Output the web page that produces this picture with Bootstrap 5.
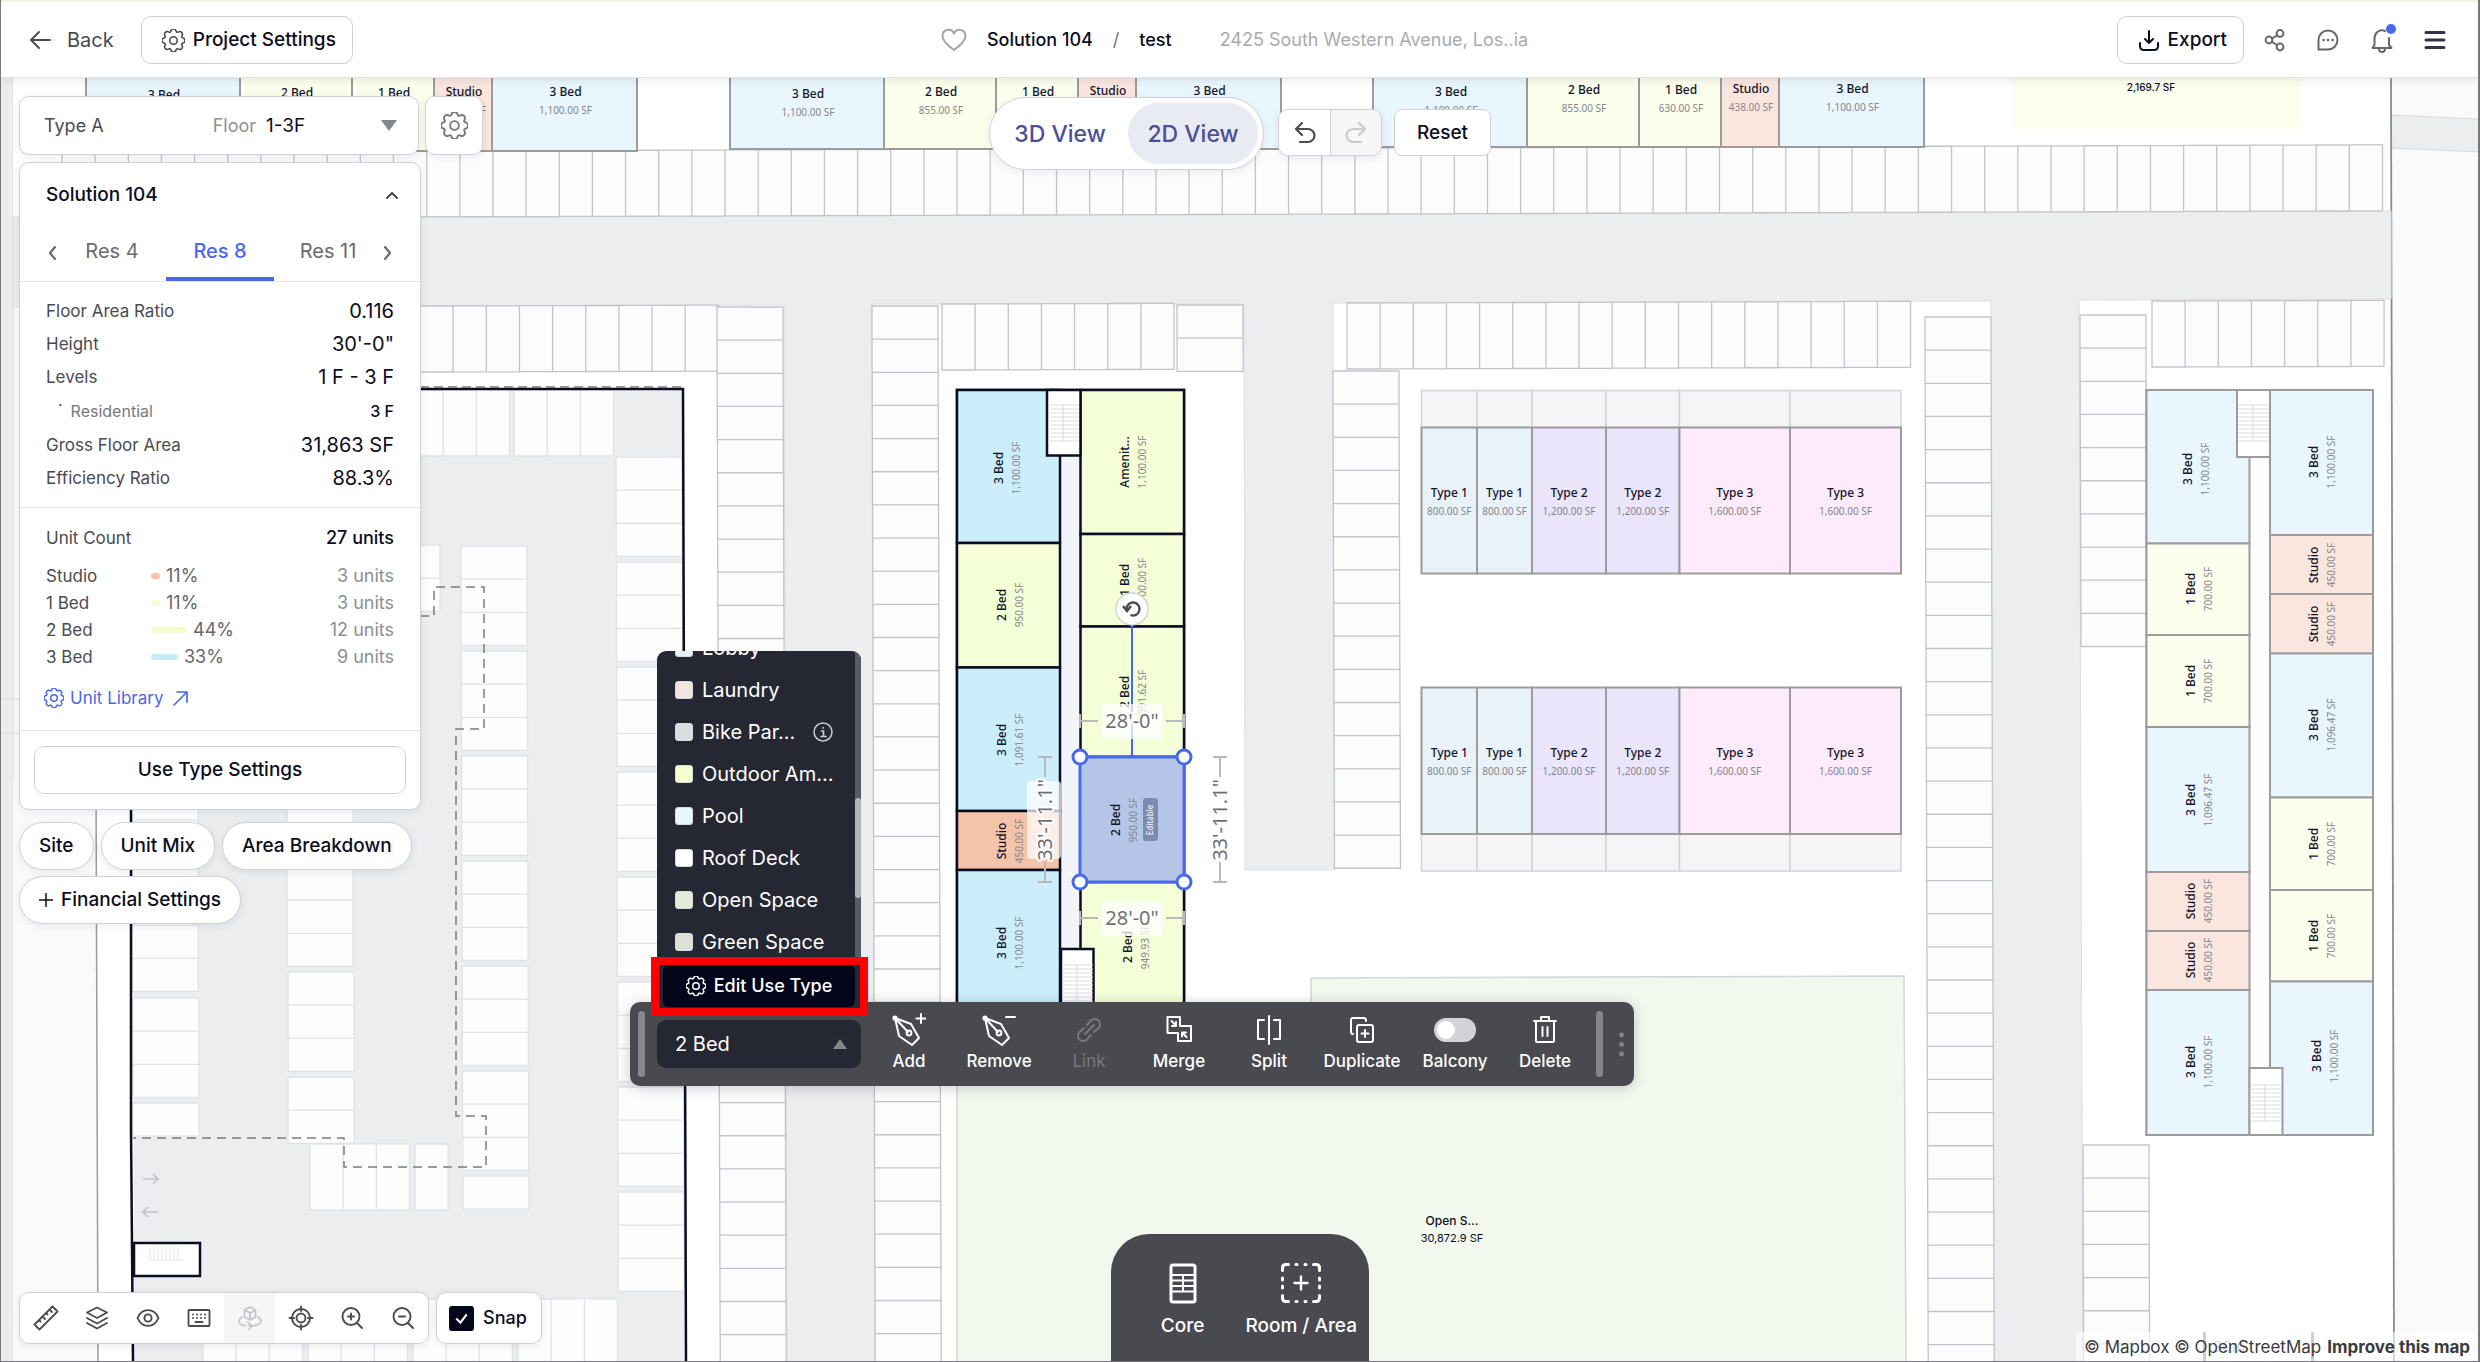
<!DOCTYPE html>
<html lang="en">
<head>
<meta charset="utf-8">
<meta name="viewport" content="width=device-width, initial-scale=1">
<title>Solution 104 / test</title>
<link href="https://cdn.jsdelivr.net/npm/bootstrap@5.3.0/dist/css/bootstrap.min.css" rel="stylesheet">
<style>
:root{--ink:#0b0d22;--soft:#4a4b50;--mute:#8e8f94;--edge:#d0d1d6;--blue:#4869ec;--dark:#494a4f;--deep:#252833}
body{font-family:Inter,"Liberation Sans",sans-serif;font-size:18px;line-height:24px;color:var(--ink);background:#fff;border:1px solid #77787b;border-top:0;border-right-width:2px;overflow:hidden}
svg.ico{fill:none;stroke:currentColor;stroke-linecap:round;stroke-linejoin:round;flex:none;display:block}
button{font-weight:500;color:inherit}
.topbar{height:78px;background:#fff;border-bottom:1px solid #e2e3e6;box-shadow:0 1px 10px rgba(30,30,60,.12);z-index:5;border-top:2px solid #f1f1e6;padding-top:1px}
.topbar>div{flex:1 1 0}
.crumbs{padding-right:2px}
.addr{color:#a9aaae}
.endset{gap:20px;padding-right:32px;color:#66676c}
.endicons{gap:30px}
.backset{gap:27px}
.bare{border:0;background:none;padding:0;color:var(--soft);font-weight:400}
.boxbtn{border:1px solid var(--edge);border-radius:10px;background:#fff;height:48px;color:var(--ink);font-weight:500;font-size:19px}
.fs20{font-size:20px}
.dotnew{position:absolute;right:-2px;top:-3px;width:10px;height:10px;border-radius:50%;background:var(--blue)}
.stage{min-height:0}
.plan{position:absolute;inset:0;width:100%;height:100%;display:block}
.plan .stall{fill:#fcfcfc;stroke:#c3c3ca;stroke-width:1.3}
.plan .pale{fill:#fdfdfd;stroke:#e1e2e6;stroke-width:1.3}
.plan text{text-anchor:middle;font-family:"Noto Sans","Open Sans",sans-serif}
.plan .un{font-size:12px;font-weight:500;fill:#12142a}
.plan .sf{font-size:10px;fill:#85868c}
.plan .tag{font-size:8px;fill:#fff}
.plan .ui{font-family:Inter,sans-serif}
.plan .dim{font-size:20px;fill:#6f7075;stroke:#fff;stroke-width:4px;paint-order:stroke;stroke-linejoin:round}
.leftcol{position:absolute;left:18px;top:18px;z-index:2}
.gap7{gap:7px}
.gap6{gap:6px}
.floaty{background:#fff;border:1px solid var(--edge);border-radius:10px;box-shadow:0 2px 8px rgba(30,30,60,.08)}
.floorbar{width:400px;height:59px;padding:0 16px 0 24px}
.floorbar label{color:var(--mute);margin-right:10px}
.floorbar select{appearance:none;border:0;outline:0;color:var(--ink);width:136px;padding:0;font-size:19px;background:url("data:image/svg+xml,%3Csvg xmlns='http://www.w3.org/2000/svg' viewBox='0 0 16 11'%3E%3Cpath d='M0 0h16L8 11z' fill='%2385868b'/%3E%3C/svg%3E") no-repeat right 5px center/16px 11px}
.gearbtn{width:58px;height:59px;color:#77787d}
.report{width:402px;margin-top:7px}
.headrow{padding:20px 22px 18px 26px;font-size:19px}
.tabs{height:56px;color:#6a6b70}
.tabs button{height:56px;border:0;background:none;padding:0;font-weight:400;font-size:20px;border-bottom:4px solid transparent;border-radius:2px 2px 0 0;width:108px;color:#6a6b70}
.tabs button.on{color:var(--blue);font-weight:500;border-color:var(--blue)}
.rule{border-top:1px solid #e3e4e7}
.inset{padding:12px 26px 13px}
.inset2{padding:18px 26px 20px}
.inset3{padding:15px 14px}
.metric{height:33px;color:var(--soft)}
.metric.tall{height:35px}
.metric b{font-weight:400;font-size:20px;color:var(--ink)}
.lbl{font-size:17px}
.metric.tall,.metric b.small3{font-size:16px}
.mix{height:27px;font-size:18px;color:#66676c}
.mix .nm{width:105px;font-size:17px;color:var(--soft)}
.mix .bar{height:6px;border-radius:3px;margin-right:6px}
.mix .u{color:var(--mute);margin-left:auto}
.liblink{color:var(--blue);font-size:17px;text-decoration:none;gap:6px;margin-left:-2px}
.pills{margin-top:12px}
.pillbtn{height:48px;border-radius:24px;padding:0 19px;font-weight:500;font-size:19px}
.finbtn{margin-top:6px}
.viewsw{position:absolute;left:988px;top:19px;height:73px;border-radius:37px;padding:5px;gap:3px}
.viewsw button{border:0;background:none;border-radius:31px;width:130px;font-size:23px;color:#4b4f97;font-weight:500}
.viewsw button.on{background:#e9ebf2}
.hist{position:absolute;left:1277px;top:31px;gap:12px}
.hist button{width:51px;height:45px;border:0;background:#fff;color:#4a4b50}
.hist button:disabled{background:#f6f6f7;color:#c9cacd}
.hist .grp{overflow:hidden}
.hist .grp button+button{border-left:1px solid var(--edge)}
.hist .rst{width:97px;height:47px;border:1px solid var(--edge);border-radius:8px;color:var(--ink);background:#fff;font-size:19px}
.tools{position:absolute;left:18px;bottom:17px}
.tools .cell{width:51px;height:50px;border:0;background:none;padding:0;color:var(--soft)}
.tools .cell:disabled{background:#f5f5f5;color:#c4c5c8}
.snap{width:106px;padding-left:12px;font-weight:500;gap:9px}
.snap input{appearance:none;width:25px;height:25px;border-radius:3px;margin:0;background:#04061c url("data:image/svg+xml,%3Csvg xmlns='http://www.w3.org/2000/svg' viewBox='0 0 24 24'%3E%3Cpath d='M7 12l4 4 6-8' fill='none' stroke='%23fff' stroke-width='2'/%3E%3C/svg%3E")}
.editbar{position:absolute;left:629px;top:924px;height:84px;width:1004px;border-radius:10px;background:var(--dark);color:#fff;box-shadow:0 2px 14px rgba(30,30,60,.22);padding:0 10px 0 8px}
.grip{width:7px;height:66px;border-radius:4px;background:#86878c}
.usesel{appearance:none;width:204px;height:48px;margin:0 3px 0 12px;border:0;border-radius:9px;padding:0 18px;color:#fff;font-size:20px;background:var(--deep) url("data:image/svg+xml,%3Csvg xmlns='http://www.w3.org/2000/svg' viewBox='0 0 14 10'%3E%3Cpath d='M0 10h14L7 0z' fill='%2385868b'/%3E%3C/svg%3E") no-repeat right 14px center/14px 10px}
.act{width:90px;border:0;background:none;color:#fff;padding:0 0 3px;font-size:17px;line-height:22px;gap:3px}
.act.wide{width:96px}
.act:disabled{color:#77787d;font-weight:400}
.form-switch.bal{padding:0 0 3px;min-height:0}
.bal span{height:34px}
.bal input.form-check-input{width:42px;height:24px;margin:0;float:none;border:0;background-color:#d2d3d8;background-image:url("data:image/svg+xml,%3Csvg xmlns='http://www.w3.org/2000/svg' viewBox='-4 -4 8 8'%3E%3Ccircle r='3' fill='%23fff'/%3E%3C/svg%3E")}
.usemenu{position:absolute;left:656px;top:573px;width:204px;height:352px;border-radius:9px 9px 0 0;background:var(--deep);color:#fff;overflow:hidden;font-size:20px}
.usemenu ul{margin:-24px 0 0;height:330px;overflow:hidden}
.usemenu li{height:42px;padding:0 28px 0 18px;gap:9px;white-space:nowrap}
.swatch{width:18px;height:18px;border-radius:3px;border:1px solid #d9dade;flex:none}
.track{position:absolute;right:0;top:0;width:6px;height:306px;background:#5a5b66}
.track i{display:block;width:6px;height:100px;margin-top:147px;border-radius:3px;background:#b3b4b8}
.callout{position:absolute;left:650px;top:879px;width:217px;height:59px;border:8px solid #f00;background:var(--deep);z-index:3;padding:0 5px 0 4px}
.callout button{border:0;border-radius:6px;background:#03051b;color:#fff;height:42px;width:100%;font-size:18px;padding:0 0 1px}
.makebar{position:absolute;left:1110px;bottom:0;width:258px;height:127px;border-radius:38px 38px 0 0;background:var(--dark);color:#fff;padding:28px 12px 0 0;gap:41px}
.makebar button{border:0;background:none;color:#fff;padding:0;font-size:19px;line-height:24px}
.makebar svg{margin-bottom:10px}
.attrib{position:absolute;right:0;bottom:0;height:29px;background:rgba(255,255,255,.6);padding:0 8px;font-size:17px;color:#3a3b40}
.attrib a{color:inherit;text-decoration:none}
</style>
</head>
<body class="vh-100 d-flex flex-column">
<svg width="0" height="0" class="position-absolute" aria-hidden="true">
 <symbol id="gear" viewBox="0 0 16 16"><path d="M9.796 1.343c-.527-1.79-3.065-1.79-3.592 0l-.094.319a.873.873 0 0 1-1.255.52l-.292-.16c-1.64-.892-3.433.902-2.54 2.541l.159.292a.873.873 0 0 1-.52 1.255l-.319.094c-1.79.527-1.79 3.065 0 3.592l.319.094a.873.873 0 0 1 .52 1.255l-.16.292c-.892 1.64.901 3.434 2.541 2.54l.292-.159a.873.873 0 0 1 1.255.52l.094.319c.527 1.79 3.065 1.79 3.592 0l.094-.319a.873.873 0 0 1 1.255-.52l.292.16c1.64.893 3.434-.902 2.54-2.541l-.159-.292a.873.873 0 0 1 .52-1.255l.319-.094c1.79-.527 1.79-3.065 0-3.592l-.319-.094a.873.873 0 0 1-.52-1.255l.16-.292c.893-1.64-.902-3.433-2.541-2.54l-.292.159a.873.873 0 0 1-1.255-.52z"/><circle cx="8" cy="8" r="2.6"/></symbol>
 <symbol id="pen" viewBox="0 0 34 34"><path d="M3 5l16 6 8 14-7 7-13-9zM3 5l13 14"/><circle cx="17" cy="20" r="2.4"/><circle cx="3" cy="5" r="1.6" fill="currentColor"/></symbol>
</svg>

<header class="topbar d-flex align-items-center position-relative">
 <div class="backset d-flex align-items-center ps-4">
  <button class="bare fs20 d-flex align-items-center ms-1"><svg class="ico me-3" width="22" height="20" viewBox="0 0 22 20" stroke-width="2"><path d="M2 10h19M10 2l-8 8 8 8"/></svg>Back</button>
  <button class="boxbtn d-flex align-items-center px-3"><svg class="ico ms-1 me-2" width="23" height="23" stroke-width="1.1" color="#4a4b50"><use href="#gear"/></svg>Project Settings</button>
 </div>
 <nav class="crumbs d-flex align-items-center justify-content-center" aria-label="Project">
  <svg class="ico me-3" width="26" height="24" viewBox="0 0 26 24" stroke-width="2" color="#a3a4a9"><path d="M13 22C6 17 1.500 12.500 1.500 8A6 6 0 0 1 13 5.500 6 6 0 0 1 24.500 8C24.500 12.500 20 17 13 22z"/></svg>
  <span class="fw-medium ms-1">Solution 104</span><span class="mx-3 px-1 text-secondary">/</span><span class="fw-medium">test</span>
  <span class="addr ms-5">2425 South Western Avenue, Los..ia</span>
 </nav>
 <div class="endset d-flex align-items-center justify-content-end">
  <button class="boxbtn d-flex align-items-center px-3"><svg class="ico ms-1 me-2" width="22" height="22" viewBox="0 0 22 22" stroke-width="2"><path d="M11 2v12M7 10l4 4 4-4M2 14v3q0 4 4 4h10q4 0 4-4v-3"/></svg>Export</button>
  <div class="endicons d-flex align-items-center">
  <svg class="ico" width="22" height="24" viewBox="0 0 22 24" stroke-width="2"><circle cx="5" cy="12" r="3.400"/><circle cx="16" cy="5.500" r="3.400"/><circle cx="16" cy="19" r="3.400"/><path d="M8 10.500l5-3M8 14l5 3"/></svg>
  <svg class="ico" width="24" height="24" viewBox="0 0 24 24" stroke-width="2"><path d="M2.500 21.500V12A9.500 9.500 0 1 1 12 21.500z"/><path d="M7.500 12h.1M12 12h.1M16.500 12h.1" stroke-width="2.600"/></svg>
  <span class="position-relative"><svg class="ico" width="24" height="26" viewBox="0 0 24 26" stroke-width="2"><path d="M4.500 18V10.500A7.500 7.500 0 0 1 15 4M19 11v7l2.500 3h-19l2-3M9 22a3 3 0 0 0 6 0"/></svg><i class="dotnew"></i></span>
  <svg class="ico" width="22" height="20" viewBox="0 0 22 20" stroke-width="3" color="#33354a"><path d="M2 2.500h18M2 10h18M2 17.500h18"/></svg>
  </div>
 </div>
</header>

<main class="stage position-relative flex-fill">
<svg class="plan" viewBox="1 78 2477 1283" preserveAspectRatio="xMinYMin slice" id="plan" role="img" aria-label="Site plan">
 <rect width="2480" height="1362" fill="#fafafa"/>
 <rect width="13" height="1362" fill="#ecedef"/><path d="M13 78V1362" stroke="#dcdde0"/><path d="M0 699h20M0 733h20" stroke="#dcdde0"/>
 <path d="M2391 115l89 4v33l-89-4z" fill="#ecedef" stroke="#d9dadd"/>
 <path d="M13 78H2391L2394 1362H98L96 306H13z" fill="#fff"/>
 <path d="M13 780h83l2 582H13z" fill="#fafafa"/>
 <path d="M96 780L98 1362" stroke="#9a9b9e" stroke-width="1.500"/>
 <path d="M2391 78L2394 1362" stroke="#8b8c90" stroke-width="1.800"/>
 <g fill="#ecedef" stroke="#dddee1" stroke-width="1">
  <path d="M13 217L2391 211V299L2079 300 2083 1362H1994L1991 301 1333 303 1335 870H1245L1244 304 872 304 875 1362H787L784 305 13 307z"/>
 </g>
 <path d="M1311 978L1904 976 1906 1362H957V1080H1311z" fill="#f3f8ef" stroke="#d3d6d6" stroke-width="1.500"/>
 <path d="M132 389H683L686 1362H134z" fill="#ecedef"/>
 <g id="stalls"></g>
 <path d="M131 389H683L686 1362" fill="none" stroke="#0b0d22" stroke-width="2.500"/>
 <path d="M420 387H683" stroke="#777" stroke-width="1.500" stroke-dasharray="9 5"/>
 <path d="M131 389V1130L133 1362" fill="none" stroke="#0b0d22" stroke-width="2.500"/>
 <path d="M420 616h14v-29h50v142h-28v387h30v51H344v-29H133" fill="none" stroke="#7a7b80" stroke-width="1.500" stroke-dasharray="9 6"/>
 <rect x="134" y="1243" width="66" height="33" fill="#fff" stroke="#0b0d22" stroke-width="2.500"/>
 <path d="M149 1260h36M150 1246v14M154 1246v14M158 1246v14M162 1246v14M166 1246v14M170 1246v14M174 1246v14M178 1246v14" stroke="#e6e6ea"/>
 <path d="M143 1179h15l-5-5m5 5l-5 5M158 1212h-15l5-5m-5 5l5 5" fill="none" stroke="#c2c3c6" stroke-width="1.500"/>
 <rect x="2013" y="78" width="289" height="51" fill="#fcfeee"/>
 <text class="ui" x="2151" y="91" font-size="10" font-weight="500" fill="#0b0d22">2,169.7 SF</text>
 <g id="units"></g>
 <g fill="none" stroke="#4869ec">
  <path d="M1132 620V757" stroke-width="2"/>
  <rect x="1080" y="757" width="104" height="125" fill="#b4c5e8" stroke-width="3"/>
 </g>
 <g id="seltext"></g>
 <rect x="1143" y="798" width="15" height="43" rx="3" fill="#7d8bb4"/>
 <text class="tag" transform="translate(1153 820) rotate(-90)">Editable</text>
 <circle cx="1132" cy="609" r="16" fill="#fff" stroke="#d3d3da" stroke-width="1.500"/>
 <path d="M1126.500 610a6.500 6.500 0 1 1 4 6M1123 607l4 5 4-5" fill="none" stroke="#4a4b50" stroke-width="2.400" transform="translate(0 -1)"/>
 <g fill="#fff" fill-opacity=".72"><rect x="1101" y="704" width="62" height="35" rx="4"/><rect x="1101" y="901" width="62" height="35" rx="4"/><rect x="1027" y="781" width="34" height="78" rx="4"/></g>
 <path d="M1080 721h18M1166 721h18M1080 714v14M1184 714v14M1080 918h18M1166 918h18M1080 911v14M1184 911v14M1045 757v20M1045 862v20M1038 757h14M1038 882h14M1220 757v20M1220 862v20M1213 757h14M1213 882h14" stroke="#b7b9bd" stroke-width="2"/>
 <text class="dim" x="1132" y="728">28'-0"</text><text class="dim" x="1132" y="925">28'-0"</text>
 <text class="dim" transform="translate(1052 820) rotate(-90)">33'-11.1"</text>
 <text class="dim" transform="translate(1227 820) rotate(-90)">33'-11.1"</text>
 <g fill="#fff" stroke="#4869ec" stroke-width="3"><circle cx="1080" cy="757" r="7"/><circle cx="1184" cy="757" r="7"/><circle cx="1080" cy="882" r="7"/><circle cx="1184" cy="882" r="7"/></g>
 <text class="ui" x="1452" y="1225" font-size="12" font-weight="500" fill="#0b0d22">Open S...</text>
 <text class="ui" x="1452" y="1242" font-size="11" fill="#0b0d22">30,872.9 SF</text>
 <path d="M2204.500 1332v29M2312.500 1332v29" stroke="#85868a" stroke-width="3"/>
 <text class="ui" x="2229" y="1352" font-size="15" fill="#9a9b9e">30m</text>
</svg>

<div class="leftcol d-flex flex-column align-items-start">
 <div class="d-flex gap6">
  <div class="floaty floorbar d-flex align-items-center">
   <span class="flex-fill" style="color:var(--soft)">Type A</span>
   <label for="floor">Floor</label>
   <select id="floor"><option>1-3F</option></select>
  </div>
  <button class="floaty gearbtn d-flex align-items-center justify-content-center p-0" aria-label="Floor settings"><svg class="ico" width="27" height="27" stroke-width="1.100"><use href="#gear"/></svg></button>
 </div>
 <section class="floaty report">
  <div class="headrow d-flex align-items-center justify-content-between fw-medium">
   <span>Solution 104</span><svg class="ico" width="12" height="8" viewBox="0 0 12 8" stroke-width="2" color="#4a4b50"><path d="M1 7l5-5 5 5"/></svg>
  </div>
  <div class="tabs d-flex align-items-center px-4">
   <svg class="ico ms-1" width="9" height="14" viewBox="0 0 9 14" stroke-width="2.200"><path d="M7 1L2 7l5 6"/></svg>
   <div class="d-flex flex-fill justify-content-center"><button>Res 4</button><button class="on">Res 8</button><button>Res 11</button></div>
   <svg class="ico me-1" width="9" height="14" viewBox="0 0 9 14" stroke-width="2.200"><path d="M2 1l5 6-5 6"/></svg>
  </div>
  <div class="rule inset">
   <div class="metric d-flex align-items-center justify-content-between"><span class="lbl">Floor Area Ratio</span><b>0.116</b></div>
   <div class="metric d-flex align-items-center justify-content-between"><span class="lbl">Height</span><b>30'-0"</b></div>
   <div class="metric d-flex align-items-center justify-content-between"><span class="lbl">Levels</span><b>1 F - 3 F</b></div>
   <div class="metric tall d-flex align-items-center"><span class="align-self-start ms-2 me-2 ps-1">·</span><span class="flex-fill" style="color:#77787d">Residential</span><b class="small3 fw-medium">3 F</b></div>
   <div class="metric d-flex align-items-center justify-content-between"><span class="lbl">Gross Floor Area</span><b>31,863 SF</b></div>
   <div class="metric d-flex align-items-center justify-content-between"><span class="lbl">Efficiency Ratio</span><b>88.3%</b></div>
  </div>
  <div class="rule inset2">
    <div class="d-flex justify-content-between mb-2 pb-1" style="color:var(--soft)"><span class="lbl">Unit Count</span><span class="fw-medium" style="color:var(--ink)">27 units</span></div>
    <div class="mix d-flex align-items-center"><span class="nm">Studio</span><span class="bar" style="width:9px;background:#f5c3a9"></span>11%<span class="u">3 units</span></div>
    <div class="mix d-flex align-items-center"><span class="nm">1 Bed</span><span class="bar" style="width:9px;background:#f4fed7"></span>11%<span class="u">3 units</span></div>
    <div class="mix d-flex align-items-center"><span class="nm">2 Bed</span><span class="bar" style="width:36px;background:#f1fdc8"></span>44%<span class="u">12 units</span></div>
    <div class="mix d-flex align-items-center"><span class="nm">3 Bed</span><span class="bar" style="width:27px;background:#c6ecfa"></span>33%<span class="u">9 units</span></div>
    <a href="#" class="liblink d-flex align-items-center mt-3"><svg class="ico" width="20" height="20" stroke-width="1.200"><use href="#gear"/></svg>Unit Library<svg class="ico ms-1" width="15" height="15" viewBox="0 0 15 15" stroke-width="1.700"><path d="M1 14L14 1M4 1h10v10"/></svg></a>
  </div>
  <div class="rule inset3"><button class="boxbtn w-100">Use Type Settings</button></div>
 </section>
 <div class="pills d-flex gap7"><button class="floaty pillbtn">Site</button><button class="floaty pillbtn">Unit Mix</button><button class="floaty pillbtn">Area Breakdown</button></div>
 <button class="floaty pillbtn finbtn d-flex align-items-center gap-2"><svg class="ico" width="14" height="14" viewBox="0 0 14 14" stroke-width="1.500"><path d="M7 0v14M0 7h14"/></svg>Financial Settings</button>
</div>

<div class="viewsw floaty d-flex"><button>3D View</button><button class="on">2D View</button></div>
<div class="hist d-flex">
 <div class="grp floaty d-flex">
  <button class="d-flex align-items-center justify-content-center p-0" aria-label="Undo"><svg class="ico" width="22" height="22" viewBox="0 0 22 22" stroke-width="2.200"><path d="M8 1L2 7l6 6M3 7h11a6.500 6.500 0 0 1 0 13H6"/></svg></button>
  <button disabled class="d-flex align-items-center justify-content-center p-0" aria-label="Redo"><svg class="ico" width="22" height="22" viewBox="0 0 22 22" stroke-width="2.200"><path d="M14 1l6 6-6 6M19 7H8a6.500 6.500 0 0 0 0 13h8"/></svg></button>
 </div>
 <button class="rst p-0">Reset</button>
</div>

<div class="usemenu" role="listbox" aria-label="Use type">
 <ul class="list-unstyled">
  <li class="d-flex align-items-center"><span class="swatch" style="background:#e3effb"></span>Lobby</li>
  <li class="d-flex align-items-center"><span class="swatch" style="background:#f3e6e1"></span>Laundry</li>
  <li class="d-flex align-items-center"><span class="swatch" style="background:#d9dde2"></span>Bike Par...<svg class="ico ms-auto" width="20" height="20" viewBox="0 0 20 20" stroke-width="1.500" color="#c9cacd"><circle cx="10" cy="10" r="9"/><path d="M8.500 9h2v5M8 14.500h5M10 5.500v.5" stroke-width="1.700"/></svg></li>
  <li class="d-flex align-items-center"><span class="swatch" style="background:#f4fed0"></span>Outdoor Am...</li>
  <li class="d-flex align-items-center"><span class="swatch" style="background:#e8f6fd"></span>Pool</li>
  <li class="d-flex align-items-center"><span class="swatch" style="background:#fff"></span>Roof Deck</li>
  <li class="d-flex align-items-center"><span class="swatch" style="background:#e3ebd6"></span>Open Space</li>
  <li class="d-flex align-items-center"><span class="swatch" style="background:#dce0d6"></span>Green Space</li>
 </ul>
 <div class="track"><i></i></div>
</div>

<div class="editbar d-flex align-items-center">
 <span class="grip"></span>
 <select class="usesel" aria-label="Use type"><option>2 Bed</option></select>
 <div class="d-flex">
 <button class="act d-flex flex-column align-items-center"><svg class="ico" width="34" height="34" viewBox="0 0 34 34" stroke-width="2"><use href="#pen"/><path d="M29 1v9M24.500 5.500h9"/></svg>Add</button>
 <button class="act d-flex flex-column align-items-center"><svg class="ico" width="34" height="34" viewBox="0 0 34 34" stroke-width="2"><use href="#pen"/><path d="M24 4h9"/></svg>Remove</button>
 <button disabled class="act d-flex flex-column align-items-center"><svg class="ico" width="34" height="34" viewBox="0 0 34 34" stroke-width="2"><path d="M13 21l9-9M15 12l4-4.500a5 5 0 0 1 7.500 7.500L22 19M19 22l-4 4.500a5 5 0 0 1-7.500-7.500L12 15"/></svg>Link</button>
 <button class="act d-flex flex-column align-items-center"><svg class="ico" width="34" height="34" viewBox="0 0 34 34" stroke-width="2"><path d="M5.500 4H18v9h11v15H16V20H5.500zM9.500 8l4.500 4.500M14 9v4h-4M24.500 24L20 19.500M20 23.500v-4h4"/></svg>Merge</button>
 <button class="act d-flex flex-column align-items-center"><svg class="ico" width="34" height="34" viewBox="0 0 34 34" stroke-width="2"><path d="M17 3v28M12 7H6v19h6M22 7h6v19h-6"/></svg>Split</button>
 <button class="act wide d-flex flex-column align-items-center"><svg class="ico" width="34" height="34" viewBox="0 0 34 34" stroke-width="2"><rect x="12" y="12" width="16" height="17" rx="2"/><path d="M8 21q-2 0-2-2V7q0-2 2-2h11q2 0 2 3M20 17v7M16.500 20.500h7"/></svg>Duplicate</button>
 <label class="act form-check form-switch bal d-flex flex-column align-items-center fw-medium mb-0"><span class="d-flex align-items-center"><input class="form-check-input" type="checkbox" role="switch"></span>Balcony</label>
 <button class="act d-flex flex-column align-items-center"><svg class="ico" width="34" height="34" viewBox="0 0 34 34" stroke-width="2"><path d="M6 8h22M13 8V4h8v4M8 8v20q0 1 1 1h16q1 0 1-1V8M14.500 14v9M19.500 14v9"/></svg>Delete</button>
 </div>
 <span class="grip ms-auto"></span>
 <svg class="ms-3" width="5" height="25" viewBox="0 0 5 25" fill="#86878c"><circle cx="2.500" cy="3" r="2.400"/><circle cx="2.500" cy="12.500" r="2.400"/><circle cx="2.500" cy="22" r="2.400"/></svg>
</div>
<div class="callout"><button class="d-flex align-items-center justify-content-center gap-2"><svg class="ico" width="20" height="20" stroke-width="1.200"><use href="#gear"/></svg>Edit Use Type</button></div>

<div class="tools d-flex gap7">
 <div class="floaty d-flex overflow-hidden">
  <button class="cell d-flex align-items-center justify-content-center" aria-label="Measure"><svg class="ico" width="26" height="26" viewBox="0 0 26 26" stroke-width="1.800"><path d="M1.500 19.500L19.500 1.500l5 5L6.500 24.500zM16.500 4.500l2.500 2.500M13 8l1.500 1.500M9.500 11.500L12 14M6 15l1.500 1.500"/></svg></button>
  <button class="cell d-flex align-items-center justify-content-center" aria-label="Layers"><svg class="ico" width="24" height="26" viewBox="0 0 24 26" stroke-width="1.800"><path d="M12 2.500l10 5-10 5.500-10-5.500zM2 13l10 5.500L22 13M2 18l10 5.500L22 18"/></svg></button>
  <button class="cell d-flex align-items-center justify-content-center" aria-label="Visibility"><svg class="ico" width="24" height="20" viewBox="0 0 24 20" stroke-width="1.900"><path d="M1.500 10C6-.5 18-.5 22.500 10 18 20.500 6 20.500 1.500 10z"/><circle cx="12" cy="10" r="3.600"/></svg></button>
  <button class="cell d-flex align-items-center justify-content-center" aria-label="Shortcuts"><svg class="ico" width="24" height="20" viewBox="0 0 24 20" stroke-width="1.800"><rect x="1.500" y="2" width="21" height="16" rx="1"/><path d="M6 6.500h.1M10 6.500h.1M14 6.500h.1M18 6.500h.1M6 10h.1M10 10h.1M14 10h.1M18 10h.1M8.500 14h7"/></svg></button>
  <button disabled class="cell d-flex align-items-center justify-content-center" aria-label="Rotate view"><svg class="ico" width="26" height="26" viewBox="0 0 26 26" stroke-width="1.700"><path d="M13 2l5.500 3v7L13 15l-5.500-3V5zM7.500 5L13 8l5.500-3M13 8v7M5 12c-5 3-3.500 8 3.500 8.500M21 12c6 4 3 9-9 9M11 17.500l4 3.500-3 3.500"/></svg></button>
  <button class="cell d-flex align-items-center justify-content-center" aria-label="Locate"><svg class="ico" width="26" height="26" viewBox="0 0 26 26" stroke-width="1.900"><circle cx="13" cy="13" r="9"/><circle cx="13" cy="13" r="4.500"/><path d="M13 1.500V6M13 20v4.500M1.500 13H6M20 13h4.500"/></svg></button>
  <button class="cell d-flex align-items-center justify-content-center" aria-label="Zoom in"><svg class="ico" width="24" height="24" viewBox="0 0 24 24" stroke-width="1.900"><circle cx="11" cy="10.500" r="8.500"/><path d="M17 17l5 5M11 7.500v6M8 10.500h6"/></svg></button>
  <button class="cell d-flex align-items-center justify-content-center" aria-label="Zoom out"><svg class="ico" width="24" height="24" viewBox="0 0 24 24" stroke-width="1.900"><circle cx="11" cy="10.500" r="8.500"/><path d="M17 17l5 5M8 10.500h6"/></svg></button>
 </div>
 <label class="floaty snap d-flex align-items-center"><input type="checkbox" checked>Snap</label>
</div>

<div class="makebar d-flex justify-content-end align-items-start">
 <button class="d-flex flex-column align-items-center"><svg class="ico" width="40" height="42" viewBox="0 0 40 42" stroke-width="3"><rect x="8" y="3" width="24" height="37" rx="2"/><path d="M8 13h24M8 18.500h24M8 24h24M8 29.500h24M20 13v16" stroke-width="2"/></svg>Core</button>
 <button class="d-flex flex-column align-items-center"><svg class="ico" width="42" height="42" viewBox="0 0 42 42" stroke-width="3"><path d="M2.500 8.500V6q0-3.500 3.500-3.500h2.500M33.500 2.500H36q3.500 0 3.500 3.500v2.500M39.500 33.500V36q0 3.500-3.500 3.500h-2.500M8.500 39.500H6q-3.500 0-3.500-3.500v-2.500M16 2.500h1M25 2.500h1M16 39.500h1M25 39.500h1M2.500 16v2M2.500 24v2M39.500 16v2M39.500 24v2"/><path d="M21 14.500v13M14.500 21h13" stroke-width="2.400"/></svg>Room / Area</button>
</div>
<div class="attrib d-flex align-items-center gap6"><span><a href="#">© Mapbox</a> <a href="#">© OpenStreetMap</a></span><a href="#" class="fw-bold">Improve this map</a></div>
</main>
<script>
const NS='http://www.w3.org/2000/svg', P=33.15, T=.0031;
const $=id=>document.getElementById(id);
const add=(g,tag,at,txt)=>{const e=document.createElementNS(NS,tag);for(const k in at)e.setAttribute(k,at[k]);if(txt)e.textContent=txt;g.appendChild(e)};
// Rows of side-by-side stalls: x, y, count, depth; columns of stacked stalls: x, y, count, width.
const hrow=(x,y,n,d,c='stall')=>{let p='';for(let i=0;i<n;i++){const a=x+i*P,b=y-i*P*T;p+=`M${a} ${b}h${P}v${d}h${-P}z`}add($('stalls'),'path',{d:p,class:c})};
const vcol=(x,y,n,w,c='stall')=>{let p='';for(let i=0;i<n;i++){const a=x+i*P*T,b=y+i*P;p+=`M${a} ${b}h${w}v${P}h${-w}z`}add($('stalls'),'path',{d:p,class:c})};
hrow(62,152,70,66);
hrow(420,306,9,66);vcol(717,307,32,66);
hrow(410,390,3,66,'pale');hrow(514,390,3,66,'pale');
for(let k=0;k<8;k++)vcol(616+k*.3,457+k*105,3,66,'pale');
for(let k=0;k<6;k++)vcol(461+k*.3,546+k*105,3,66,'pale');vcol(463,1176,1,66,'pale');
vcol(287,762,3,66,'pale');vcol(287,867,3,66,'pale');vcol(288,972,3,66,'pale');vcol(288,1077,2,66,'pale');
vcol(132,787,3,66,'pale');vcol(132,892,3,66,'pale');vcol(133,998,3,66,'pale');vcol(133,1103,1,66,'pale');
hrow(310,1144,3,66,'pale');hrow(415,1144,1,66,'pale');vcol(374,545,2,66,'pale');
for(let k=0;k<4;k++)hrow(203+k*105,1299,3,66,'pale');
vcol(872,306,32,66);hrow(942,304,7,66);vcol(1177,305,2,66);
hrow(1347,303,17,66);vcol(1333,371,15,66);vcol(1925,317,32,66);
vcol(2080,315,10,66);vcol(2083,1145,7,66);hrow(2152,301,7,66);
const U=$('units');
const C={b:'#e9f6fd',y:'#fcfeed',s:'#fae6df',B:'#cbeefa',Y:'#f4fed7',S:'#f5c3a9',p:'#e9f2f8',v:'#ebe5fb',k:'#fdeafa'};
const box=(x,y,X,Y,f,s,w=2)=>add(U,'rect',{x,y,width:X-x,height:Y-y,fill:f,stroke:s,'stroke-width':w});
const lab=(x,y,t,s,g=U)=>{add(g,'text',{x,y:y+5,class:'un'},t);if(s)add(g,'text',{x,y:y+23,class:'sf'},s)};
const rot=(x,y,t,s,g=U)=>{add(g,'text',{transform:`translate(${x+5} ${y}) rotate(-90)`,class:'un'},t);add(g,'text',{transform:`translate(${x+22} ${y}) rotate(-90)`,class:'sf'},s)};
const stair=(x,y)=>{let d=`M${x+15} ${y}v36`;for(let i=0;i<10;i++)d+=`M${x} ${y+i*4}h31`;add(U,'path',{d,stroke:'#dcdce0',fill:'none'})};
const G='#9c9c9c',K='#0b0d22',A='1,100.00 SF';
[[86,151,94],[730,149,93],[1373,147,91]].forEach(([x,b,t])=>{
 [[0,154,'b','3 Bed',A],[154,266,'y','2 Bed','855.00 SF'],[266,348,'y','1 Bed','630.00 SF'],[348,406,'s','Studio','438.00 SF'],[406,551,'b','3 Bed',A]].forEach(([a,c,f,n,s],i)=>{box(x+a,60,x+c,b,C[f],G);lab(x+(a+c)/2+1,t-(i>0)*2-(i>2),n,s)})});
const tops=[1421.5,1477,1532,1606,1679.5,1790,1901];
for(let i=0;i<6;i++){const a=tops[i],b=tops[i+1],f=C['ppvvkk'[i]],n='Type '+(1+(i>>1)),s=['800.00 SF','1,200.00 SF','1,600.00 SF'][i>>1];
 box(a,390.5,b,427.5,'#f5f5f7','#d3d4d7',1.5);box(a,834,b,871,'#f5f5f7','#d3d4d7',1.5);
 box(a,427.5,b,573.5,f,G);box(a,687.5,b,834,f,G);lab((a+b)/2,492,n,0);lab((a+b)/2,752,n,0);
 add(U,'text',{x:(a+b)/2,y:515,class:'sf'},s);add(U,'text',{x:(a+b)/2,y:775,class:'sf'},s)}
// East building
box(2146.5,390,2373,1135,'#fdfdfd',G);
[[390,543.5,'b','3 Bed',A,469],[543.5,635,'y','1 Bed','700.00 SF',589],[635,727,'y','1 Bed','700.00 SF',681],[727,872,'b','3 Bed','1,096.47 SF',800],[872,931,'s','Studio','450.00 SF',901],[931,990,'s','Studio','450.00 SF',960],[990,1135,'b','3 Bed',A,1062]].forEach(([a,b,f,n,s,y],i)=>{box(2146.5,a,2249.5,b,C[f],G);rot(i?2190:2187,y,n,s)});
[[390,535,'b','3 Bed',A,462],[535,594,'s','Studio','450.00 SF',565],[594,653.5,'s','Studio','450.00 SF',624],[653.5,797.5,'b','3 Bed','1,096.47 SF',725],[797.5,890,'y','1 Bed','700.00 SF',844],[890,981.5,'y','1 Bed','700.00 SF',936],[981.5,1135,'b','3 Bed',A,1056]].forEach(([a,b,f,n,s,y],i)=>{box(2270,a,2373,b,C[f],G);rot(i<6?2313:2316,y,n,s)});
box(2237,390,2270,457,'#fff',G);stair(2238,405);box(2249.5,1068,2282.5,1135,'#fff',G);stair(2250,1085);
// Selected building
box(957,390,1184,1080,'#f3f4f7',K,2.5);
[[390,543,'B','3 Bed',A,468],[543,667.5,'Y','2 Bed','950.00 SF',605],[667.5,811,'B','3 Bed','1,091.61 SF',740],[811,870,'S','Studio','450.00 SF',841],[870,1040,'B','3 Bed',A,943]].forEach(([a,b,f,n,s,y],i)=>{box(957,a,1060,b,C[f],K,2.5);rot(i?1001:998,y,n,s)});
[[390,534,'Amenit...',A,462],[534,626.5,'1 Bed','700.00 SF',580],[626.5,757,'2 Bed','991.62 SF',692],[757,882,'','',0],[882,1040,'2 Bed','949.93 SF',947]].forEach(([a,b,n,s,y],i)=>{box(1080.5,a,1184,b,C.Y,K,2.5);rot(i>3?1127:1124,y,n,s)});
box(1047,390,1080.5,455.5,'#fff',K,2.5);stair(1048,405);box(1061,949,1093.5,1040,'#fff',K,2.5);stair(1062,965);
rot(1115,820,'2 Bed','950.00 SF',$('seltext'));
</script>
<script src="https://cdn.jsdelivr.net/npm/bootstrap@5.3.0/dist/js/bootstrap.bundle.min.js"></script>
</body>
</html>
